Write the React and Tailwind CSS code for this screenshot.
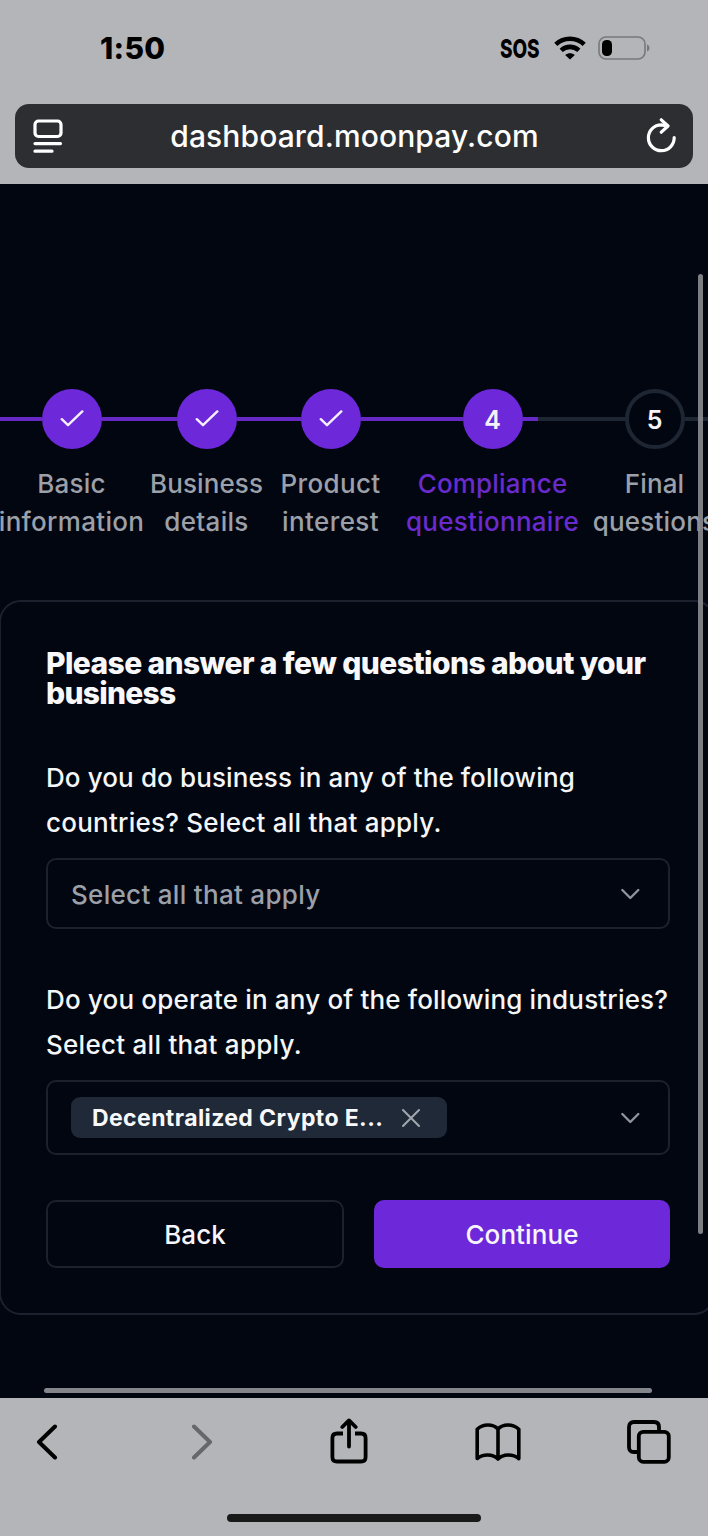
import React from "react";

function Check() {
  return (
    <svg width="24" height="18" viewBox="0 0 24 18" fill="none" stroke="#f5efff" strokeWidth="2.4" strokeLinecap="round" strokeLinejoin="round">
      <path d="M1.8 9.2 L8 15.2 L22.3 1.4" />
    </svg>
  );
}

function Chevron() {
  return (
    <svg width="20" height="12" viewBox="0 0 20 12" fill="none" stroke="#8f939c" strokeWidth="2.4" strokeLinecap="round" strokeLinejoin="round">
      <path d="M2.3 2 L10.3 10 L18.3 2" />
    </svg>
  );
}

const steps = [
  { w: "w-[143px]", a: "Basic", b: "information", as: "tracking-[0.2px]", bs: "tracking-[0.3px]", done: true },
  { w: "w-[127px]", a: "Business", b: "details", as: "tracking-[0.1px]", bs: "tracking-[0.3px]", done: true },
  { w: "w-[121px]", a: "Product", b: "interest", as: "tracking-[0.35px]", bs: "tracking-[0.4px]", done: true },
  { w: "w-[203px]", a: "Compliance", b: "questionnaire", as: "tracking-[0.2px]", bs: "tracking-[0.27px]", n: "4", active: true },
  { w: "w-[121px]", a: "Final", b: "questions", as: "tracking-[0.1px]", bs: "tracking-[0.2px]", n: "5" },
];

function Step({ s }) {
  const on = s.done || s.active;
  return (
    <div className={`${s.w} flex shrink-0 flex-col items-center`}>
      <div className="flex w-full items-center">
        <div className={`h-1 flex-1 ${on ? "bg-[#6629c6]" : "bg-[#1f2633]"}`} />
        <div
          className={`flex size-[60px] shrink-0 items-center justify-center rounded-full text-[25px] font-semibold text-[#f5f3fa] ${
            on ? "bg-[#6d28d9]" : "border-4 border-[#1f2633]"
          }`}
        >
          {s.done ? <Check /> : <span className="pt-[3px]">{s.n}</span>}
        </div>
        <div className={`flex h-1 flex-1 ${on ? "bg-[#6629c6]" : "bg-[#1f2633]"}`}>
          {s.active && <div className="ml-[15px] h-1 flex-1 bg-[#1f2633]" />}
        </div>
      </div>
      <div className={`mt-4 flex flex-col items-center text-[26px] font-medium leading-[38px] whitespace-nowrap ${s.active ? "text-[#6a2bce]" : "text-[#9ca0a9]"}`}>
        <span className={s.as}>{s.a}</span>
        <span className={s.bs}>{s.b}</span>
      </div>
    </div>
  );
}

function StatusBar() {
  return (
    <div className="flex h-[104px] items-start pl-[100px] pr-[58px] pt-[30px] text-black">
      <span className="text-[30px] font-extrabold leading-9 tracking-[0.3px]">1:50</span>
      <div className="ml-auto flex h-9 items-center">
        <span className="w-[40px] origin-left scale-x-[0.73] text-[26px] font-extrabold tracking-[-0.2px] whitespace-nowrap">SOS</span>
        <svg className="ml-[14px]" width="32" height="24" viewBox="0 0 32 24" fill="none" stroke="#000" strokeWidth="4.6">
          <path d="M1.8 8.4 C9.8 0.8 22.2 0.8 30.2 8.4" />
          <path d="M7.2 14.4 C12.2 9.7 19.8 9.7 24.8 14.4" />
          <path d="M16 23.6 L11.2 19 C14 16.6 18 16.6 20.8 19 Z" fill="#000" stroke="none" />
        </svg>
        <svg className="ml-3" width="52" height="24" viewBox="0 0 52 24">
          <rect x="1" y="1" width="46" height="22" rx="7" fill="none" stroke="#77787b" strokeWidth="1.6" />
          <rect x="4" y="4" width="10" height="16" rx="4.6" fill="#000" />
          <path d="M49 8.5 C52.3 9.3 52.3 14.7 49 15.5 Z" fill="#77787b" />
        </svg>
      </div>
    </div>
  );
}

function AddressBar() {
  return (
    <div className="mx-[15px] flex h-16 items-center justify-between rounded-[14px] bg-[#2d2e32] pl-[18px] pr-[17px] text-white">
      <svg width="30" height="34" viewBox="0 0 30 34" fill="none" stroke="#fff" strokeWidth="3.2" strokeLinecap="round">
        <rect x="2" y="2" width="26" height="15.5" rx="3.5" />
        <path d="M2 24.6 H27.5 M2 32.2 H19" />
      </svg>
      <span className="text-[30px] font-medium tracking-[0.12px]">dashboard.moonpay.com</span>
      <svg width="30" height="36" viewBox="0 0 30 36" fill="none" stroke="#fff" strokeWidth="3.2" strokeLinecap="round" strokeLinejoin="round">
        <path d="M28.2 19.6 A12.9 12.9 0 1 1 15.3 6.9 L21 7.8" />
        <path d="M15.3 1.8 L22 8 L15.3 14.2" />
      </svg>
    </div>
  );
}

function Question({ lines, children }) {
  return (
    <div>
      <p className="flex flex-col text-[26px] font-medium leading-[45px] text-[#f5f6f8] whitespace-nowrap">{lines}</p>
      {children}
    </div>
  );
}

export default function App() {
  return (
    <div className="relative flex h-[1536px] w-[708px] flex-col overflow-hidden bg-[#020611] font-['Inter',sans-serif]">
      <header className="h-[184px] shrink-0 bg-[#b4b5b9]">
        <StatusBar />
        <AddressBar />
      </header>

      <main className="h-[1214px] shrink-0 overflow-hidden pt-[205px]">
        <div className="flex">
          {steps.map((s) => (
            <Step key={s.a} s={s} />
          ))}
        </div>

        <section className="-ml-px mt-[59px] h-[715px] w-[717px] rounded-[22px] border-2 border-[#1b212e] pl-[45px] pt-[46px]">
          <h1 className="flex flex-col text-[30px] font-extrabold leading-[30px] text-[#f8f8fa] whitespace-nowrap">
            <span className="tracking-[-0.61px]">Please answer a few questions about your</span>
            <span className="tracking-[-0.75px]">business</span>
          </h1>

          <div className="mt-[47px]">
            <Question
              lines={[
                <span key="a" className="tracking-[0.11px]">Do you do business in any of the following</span>,
                <span key="b" className="tracking-[0.24px]">countries? Select all that apply.</span>,
              ]}
            >
              <div className="mt-[13px] flex h-[71px] w-[624px] items-center justify-between rounded-[10px] border-2 border-[#1c212e] pl-[23px] pr-[28px]">
                <span className="pt-px text-[26px] font-medium tracking-[0.3px] text-[#9ca0a9]">Select all that apply</span>
                <Chevron />
              </div>
            </Question>
          </div>

          <div className="mt-[48px]">
            <Question
              lines={[
                <span key="a" className="tracking-[0.17px]">Do you operate in any of the following industries?</span>,
                <span key="b" className="tracking-[0.27px]">Select all that apply.</span>,
              ]}
            >
              <div className="mt-[13px] flex h-[75px] w-[624px] items-center justify-between rounded-[10px] border-2 border-[#1c212e] pl-[23px] pr-[28px]">
                <div className="flex h-[41px] w-[376px] items-center justify-between rounded-[9px] bg-[#1f2937] pl-[21px] pr-[26px]">
                  <span className="pt-px text-[23px] font-bold tracking-[0.4px] text-[#f8f8fa] whitespace-nowrap">Decentralized Crypto E...</span>
                  <svg width="20" height="20" viewBox="0 0 20 20" stroke="#a0a5ae" strokeWidth="2.1" strokeLinecap="round">
                    <path d="M2 2 L18 18 M18 2 L2 18" />
                  </svg>
                </div>
                <Chevron />
              </div>
            </Question>
          </div>

          <div className="mt-[45px] flex w-[624px] justify-between text-[26px] font-medium text-[#f8f6fc]">
            <button className="h-[68px] w-[298px] rounded-[10px] border-2 border-[#1c212e]">Back</button>
            <button className="h-[68px] w-[296px] rounded-[10px] bg-[#6d28d9] tracking-[0.1px]">Continue</button>
          </div>
        </section>
      </main>

      <footer className="flex h-[138px] shrink-0 flex-col items-center bg-[#b4b5b9]">
        <div className="flex h-[88px] w-full items-center pl-[36px]">
          <svg width="22" height="36" viewBox="0 0 22 36" fill="none" stroke="#000" strokeWidth="4" strokeLinecap="round" strokeLinejoin="round">
            <path d="M19 2.5 L3 18 L19 33.5" />
          </svg>
          <svg className="ml-[133px]" width="22" height="36" viewBox="0 0 22 36" fill="none" stroke="#66676a" strokeWidth="4" strokeLinecap="round" strokeLinejoin="round">
            <path d="M3 2.5 L19 18 L3 33.5" />
          </svg>
          <svg className="mb-[2px] ml-[117px]" width="38" height="46" viewBox="0 0 38 46" fill="none" stroke="#000" strokeWidth="3.8" strokeLinecap="round" strokeLinejoin="round">
            <path strokeLinecap="butt" d="M13 15.5 H7 Q2.4 15.5 2.4 20 V38.9 Q2.4 43.5 7 43.5 H31 Q35.6 43.5 35.6 38.9 V20 Q35.6 15.5 31 15.5 H25" />
            <path d="M19 28.5 V2.5 M12.3 9 L19 2.4 L25.7 9" />
          </svg>
          <svg className="ml-[107px]" width="46" height="38" viewBox="0 0 46 38" fill="none" stroke="#000" strokeWidth="3.6" strokeLinejoin="round" strokeLinecap="round">
            <path d="M23 6 C18 0.6 8 0.6 2.2 6.2 V35.5 C8 30.8 18 30.8 23 36 C28 30.8 38 30.8 43.8 35.5 V6.2 C38 0.6 28 0.6 23 6 V36" />
          </svg>
          <svg className="ml-[106px]" width="44" height="44" viewBox="0 0 44 44" fill="none" stroke="#000" strokeWidth="3.8">
            <rect x="11.8" y="11.8" width="30" height="30" rx="4.5" />
            <path d="M11.8 32 H6.8 Q2 32 2 27 V7 Q2 2 7 2 H27 Q32 2 32 7 V11.8" />
          </svg>
        </div>
        <div className="mt-[28px] h-2 w-[254px] rounded-full bg-[#19191a]" />
      </footer>

      <div className="absolute left-[698px] top-[274px] h-[960px] w-[5px] rounded-full bg-[#8b8c90]/90" />
      <div className="absolute left-[44px] top-[1388px] h-[5px] w-[608px] rounded-full bg-[#85868b]" />
    </div>
  );
}
